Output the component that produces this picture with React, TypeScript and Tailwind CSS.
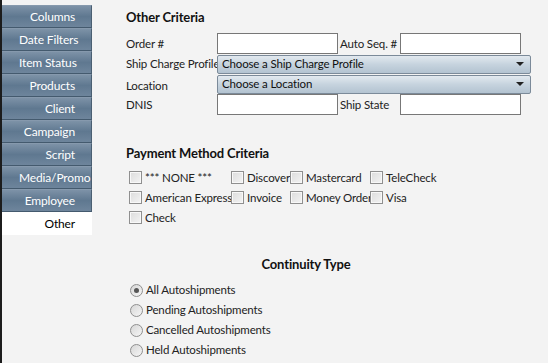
import React from 'react';

const tabs = ['Columns', 'Date Filters', 'Item Status', 'Products', 'Client', 'Campaign', 'Script', 'Media/Promo', 'Employee'];

const payRows = [
    ['*** NONE ***', 'Discover', 'Mastercard', 'TeleCheck'],
    ['American Express', 'Invoice', 'Money Order', 'Visa'],
    ['Check'],
];

const shipments = ['All Autoshipments', 'Pending Autoshipments', 'Cancelled Autoshipments', 'Held Autoshipments'];

const Box: React.FC = () => (
    <span className="inline-block w-[13px] h-[13px] shrink-0 border border-[#8f8f8f] bg-gradient-to-br from-[#dcdcdc] to-[#f4f4f4] shadow-[inset_0_0_0_1px_#f8f8f8]" />
);

const Radio: React.FC<{ on?: boolean }> = ({ on }) => (
    <span className="w-[13px] h-[13px] shrink-0 rounded-full border border-[#8f8f8f] bg-gradient-to-br from-[#d6d6d6] to-[#f6f6f6] flex items-center justify-center">
        {on && <span className="w-[5px] h-[5px] rounded-full bg-[#555]" />}
    </span>
);

const Select: React.FC<{ label: string }> = ({ label }) => (
    <div className="col-span-3 w-[314px] h-[19px] flex items-center justify-between pl-[4px] pr-[6px] border border-[#7b8a99] rounded-[2px] bg-gradient-to-b from-[#e2e9ef] via-[#c6d3de] to-[#b3c3d1] text-[#111]">
        <span className="leading-none">{label}</span>
        <span className="w-0 h-0 border-l-[4px] border-r-[4px] border-t-[4px] border-l-transparent border-r-transparent border-t-[#222]" />
    </div>
);

export default function App() {
    return (
        <div className="w-[548px] h-[363px] flex bg-[#f3f3f3] text-[11.5px] tracking-[-0.15px] text-[#222] overflow-hidden" style={{ fontFamily: 'Lato, "Liberation Sans", sans-serif' }}>
            <div className="w-[92px] h-full border-l-2 border-[#1c1c1c] pt-[5px] shrink-0 text-[12px]">
                {tabs.map((t) => (
                    <div key={t} className="h-[23px] w-[90px] flex items-center border-t border-b border-r border-t-[#8699ad] border-b-[#445a6e] border-r-[#4a5f72] bg-gradient-to-b from-[#7d92a7] via-[#5f7890] to-[#6e859c] text-white">
                        <span className="block w-[56px] ml-[17px] text-right whitespace-nowrap">{t}</span>
                    </div>
                ))}
                <div className="h-[23px] w-[90px] flex items-center bg-white text-black">
                    <span className="block w-[56px] ml-[17px] text-right">Other</span>
                </div>
            </div>

            <div className="flex-1 pl-[34px] pt-[8px]">
                <div className="font-bold text-[13px] text-[#111] h-[18px]">Other Criteria</div>

                <div className="mt-[7px] grid grid-cols-[91px_121px_62px_121px] grid-rows-[21px_20px_20px_21px] items-center whitespace-nowrap">
                    <span>Order #</span>
                    <div className="h-[21px] border border-[#777] bg-white" />
                    <span className="pl-[2px]">Auto Seq. #</span>
                    <div className="h-[21px] border border-[#777] bg-white" />

                    <span>Ship Charge Profile</span>
                    <Select label="Choose a Ship Charge Profile" />

                    <span className="pt-[3px]">Location</span>
                    <Select label="Choose a Location" />

                    <span>DNIS</span>
                    <div className="h-[21px] border border-[#777] bg-white" />
                    <span className="pl-[2px]">Ship State</span>
                    <div className="h-[21px] border border-[#777] bg-white" />
                </div>

                <div className="mt-[29px] font-bold text-[13px] text-[#111]">Payment Method Criteria</div>
                <div className="mt-[5px] flex flex-col gap-[2px] pl-[3px]">
                    {payRows.map((row, i) => (
                        <div key={i} className="flex h-[18px] items-center">
                            {row.map((p, j) => (
                                <div key={p} className={`flex items-center gap-[3px] ${j === 0 ? 'w-[102px]' : j === 1 ? 'w-[59px]' : j === 2 ? 'w-[80px]' : ''}`}>
                                    <Box />
                                    <span className="whitespace-nowrap">{p}</span>
                                </div>
                            ))}
                        </div>
                    ))}
                </div>

                <div className="mt-[28px] w-[360px] text-center font-bold text-[13px] text-[#111]">Continuity Type</div>
                <div className="mt-[7px] flex flex-col gap-[2px] pl-[4px]">
                    {shipments.map((s, i) => (
                        <div key={s} className="flex items-center gap-[3px] h-[18px]">
                            <Radio on={i === 0} />
                            <span>{s}</span>
                        </div>
                    ))}
                </div>
            </div>
        </div>
    );
}
